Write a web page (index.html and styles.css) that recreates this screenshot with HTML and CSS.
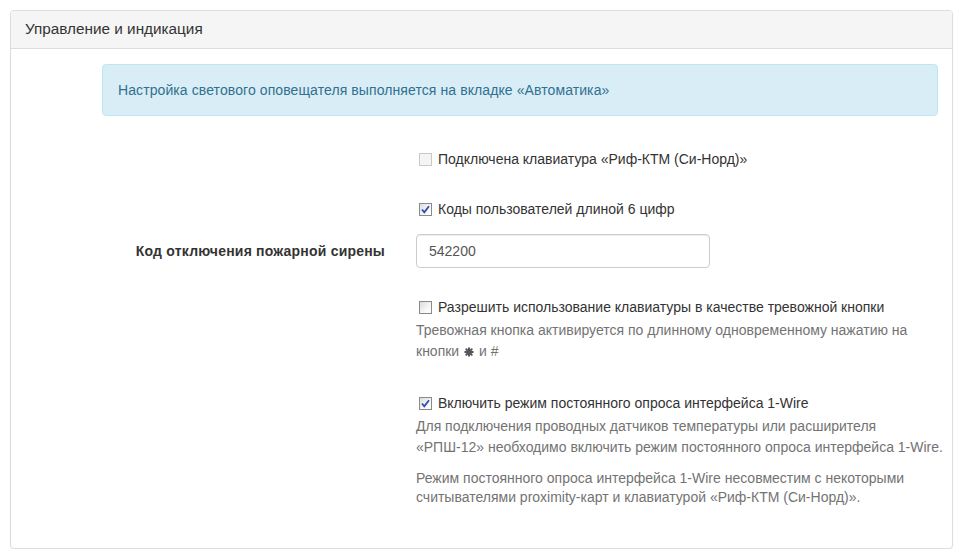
FILE: index.html
```html
<!DOCTYPE html>
<html lang="ru">
<head>
<meta charset="utf-8">
<title>Управление и индикация</title>
<link rel="stylesheet" href="styles.css">
</head>
<body>
<div class="panel">
  <div class="panel-heading">Управление и индикация</div>
  <div class="panel-body">
    <div class="alert">Настройка светового оповещателя выполняется на вкладке «Автоматика»</div>

    <div class="form-row row-1">
      <div class="label"></div>
      <div class="control">
        <label class="check disabled"><span class="box"></span>Подключена клавиатура «Риф-КТМ (Си-Норд)»</label>
      </div>
    </div>

    <div class="form-row row-2">
      <div class="label"></div>
      <div class="control">
        <label class="check"><span class="box"><svg viewBox="0 0 13 13" width="13" height="13"><path d="M3 6.5 L5.3 9.3 L10 3.2" fill="none" stroke="#2b4fa8" stroke-width="1.8"/></svg></span>Коды пользователей длиной 6 цифр</label>
      </div>
    </div>

    <div class="form-row row-3">
      <div class="label bold">Код отключения пожарной сирены</div>
      <div class="control">
        <div class="input">542200</div>
      </div>
    </div>

    <div class="form-row row-4">
      <div class="label"></div>
      <div class="control">
        <label class="check"><span class="box"></span>Разрешить использование клавиатуры в качестве тревожной кнопки</label>
        <p class="help">Тревожная кнопка активируется по длинному одновременному нажатию на <span class="nowrap">кнопки <svg class="star" viewBox="0 0 10 10" width="10" height="10"><g stroke="#555" stroke-width="2" stroke-linecap="round"><path d="M5 1.2V8.8M1.2 5H8.8M2.3 2.3L7.7 7.7M7.7 2.3L2.3 7.7"/></g></svg> и #</span></p>
      </div>
    </div>

    <div class="form-row row-5">
      <div class="label"></div>
      <div class="control">
        <label class="check"><span class="box"><svg viewBox="0 0 13 13" width="13" height="13"><path d="M3 6.5 L5.3 9.3 L10 3.2" fill="none" stroke="#2b4fa8" stroke-width="1.8"/></svg></span>Включить режим постоянного опроса интерфейса 1-Wire</label>
        <p class="help">Для подключения проводных датчиков температуры или расширителя<br>«РПШ-12» необходимо включить режим постоянного опроса интерфейса 1-Wire.</p>
        <p class="help second">Режим постоянного опроса интерфейса 1-Wire несовместим с некоторыми считывателями proximity-карт и клавиатурой «Риф-КТМ (Си-Норд)».</p>
      </div>
    </div>
  </div>
</div>
</body>
</html>
```

FILE: styles.css
```css
* { box-sizing: border-box; }
html, body {
  margin: 0;
  padding: 0;
  background: #fff;
}
body {
  font-family: "Liberation Sans", Arial, sans-serif;
  font-size: 14px;
  line-height: 20px;
  color: #333;
  padding: 10px 7px 0 10px;
}
.panel {
  border: 1px solid #ddd;
  border-radius: 4px;
  background: #fff;
  box-shadow: 0 1px 1px rgba(0,0,0,0.05);
  height: 539px;
}
.panel-heading {
  background: #f5f5f5;
  border-bottom: 1px solid #ddd;
  border-radius: 3px 3px 0 0;
  padding: 9px 14px 10px;
  font-size: 15.3px;
  line-height: 18px;
  color: #333;
}
.panel-body {
  padding: 15px 14px 15px 14px;
}
.alert {
  margin-left: 77px;
  background: #d9edf7;
  border: 1px solid #bce8f1;
  border-radius: 4px;
  color: #31708f;
  padding: 15px 15px;
  line-height: 20px;
  letter-spacing: 0.09px;
}
.form-row {
  display: grid;
  grid-template-columns: 360px 1fr;
  column-gap: 31px;
  align-items: start;
  margin-right: -14px;
}
.row-1 { margin-top: 33px; }
.row-2 { margin-top: 30px; }
.row-3 { margin-top: 15px; }
.row-4 { margin-top: 29px; }
.row-5 { margin-top: 31px; }
.label {
  text-align: right;
}
.label.bold {
  font-weight: bold;
  padding-top: 7px;
  letter-spacing: 0.2px;
}
.check {
  display: flex;
  align-items: center;
  padding-left: 3px;
  gap: 6px;
  height: 20px;
}
.box {
  width: 13px;
  height: 13px;
  border: 1px solid #8a8a8a;
  background: linear-gradient(135deg, #dcdcdc 0%, #f6f6f6 60%, #ffffff 100%);
  display: flex;
  flex: none;
  align-items: center;
  justify-content: center;
}
.box svg {
  display: block;
  margin: -1px;
}
.check.disabled .box {
  border-color: #c9c9c9;
  background: #f4f4f4;
}
.input {
  width: 294px;
  height: 34px;
  border: 1px solid #ccc;
  border-radius: 4px;
  padding: 6px 12px;
  line-height: 20px;
  color: #555;
  box-shadow: inset 0 1px 1px rgba(0,0,0,0.075);
}
.help {
  margin: 3px 0 0;
  color: #737373;
  line-height: 21px;
}
.row-4 .help {
  padding-right: 30px;
}
.nowrap {
  white-space: nowrap;
}
.help.second {
  margin-top: 11px;
  line-height: 19px;
}
.star {
  display: inline-block;
  vertical-align: -1px;
  margin: 0 1px;
}
```
